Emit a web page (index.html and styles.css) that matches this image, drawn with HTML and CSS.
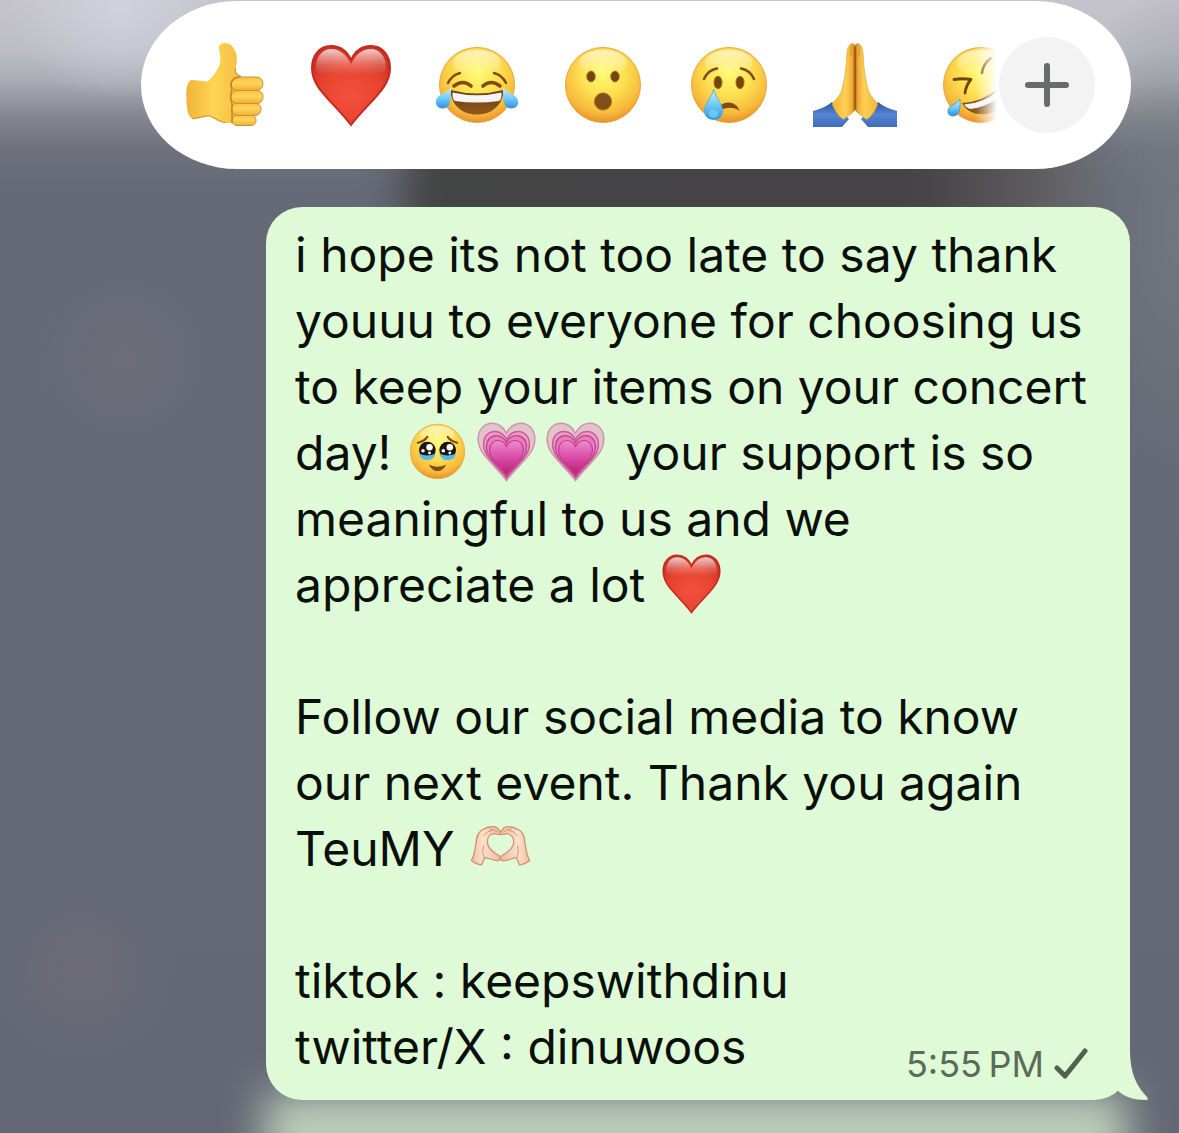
FILE: index.html
```html
<!DOCTYPE html>
<html lang="en">
 <head>
    <title>Message</title>
    <meta charset="UTF-8">
    <link rel="stylesheet" href="styles.css">
 </head>
 <body>
    <!-- shared emoji drawings -->
    <svg class="defs" aria-hidden="true">
      <defs>
        <radialGradient id="face" cx="50%" cy="34%" r="68%">
          <stop offset="0" stop-color="#fffb74"/>
          <stop offset=".45" stop-color="#fddf50"/>
          <stop offset=".8" stop-color="#f7b93b"/>
          <stop offset="1" stop-color="#e48a2c"/>
        </radialGradient>
        <linearGradient id="shine" x1="0" y1="0" x2="0" y2="1">
          <stop offset="0" stop-color="#fff" stop-opacity=".6"/>
          <stop offset="1" stop-color="#fff" stop-opacity="0"/>
        </linearGradient>
        <linearGradient id="heartshine" x1="0" y1="0" x2="0" y2="1">
          <stop offset="0" stop-color="#fff" stop-opacity=".75"/>
          <stop offset=".5" stop-color="#fff" stop-opacity=".2"/>
          <stop offset=".8" stop-color="#fff" stop-opacity="0"/>
        </linearGradient>
        <linearGradient id="tear" x1="0" y1="0" x2="0" y2="1">
          <stop offset="0" stop-color="#c4f0ff"/>
          <stop offset=".55" stop-color="#6cc8f7"/>
          <stop offset="1" stop-color="#2f8fdf"/>
        </linearGradient>
        <linearGradient id="mouth" x1="0" y1="0" x2="0" y2="1">
          <stop offset="0" stop-color="#6a3c10"/>
          <stop offset="1" stop-color="#8f5a1b"/>
        </linearGradient>
        <radialGradient id="red" cx="50%" cy="62%" r="62%">
          <stop offset="0" stop-color="#f4503e"/>
          <stop offset=".65" stop-color="#e6432f"/>
          <stop offset="1" stop-color="#c93224"/>
        </radialGradient>
        <linearGradient id="skin" x1="0" y1="0" x2="0" y2="1">
          <stop offset="0" stop-color="#f6c044"/>
          <stop offset=".45" stop-color="#ffd658"/>
          <stop offset="1" stop-color="#eead36"/>
        </linearGradient>
        <linearGradient id="palm" x1="0" y1="0" x2="1" y2="0">
          <stop offset="0" stop-color="#efb43a"/>
          <stop offset=".4" stop-color="#ffd452"/>
          <stop offset="1" stop-color="#f0b03a"/>
        </linearGradient>
        <linearGradient id="prayskin" x1="0" y1="0" x2="1" y2="0">
          <stop offset="0" stop-color="#f0b538"/>
          <stop offset=".6" stop-color="#ffd052"/>
          <stop offset=".88" stop-color="#efaa38"/>
          <stop offset="1" stop-color="#a96512"/>
        </linearGradient>
        <linearGradient id="sleeve" x1="0" y1="0" x2="0" y2="1">
          <stop offset="0" stop-color="#2c54a0"/>
          <stop offset=".5" stop-color="#5584d2"/>
          <stop offset="1" stop-color="#3f6bba"/>
        </linearGradient>
        <linearGradient id="pink" x1="0" y1="0" x2="0" y2="1">
          <stop offset="0" stop-color="#f08ccb"/>
          <stop offset=".45" stop-color="#dc52ae"/>
          <stop offset="1" stop-color="#b81f68"/>
        </linearGradient>
        <linearGradient id="light" x1="0" y1="0" x2="1" y2="0">
          <stop offset="0" stop-color="#efc0a0"/>
          <stop offset=".4" stop-color="#fce0ca"/>
          <stop offset="1" stop-color="#eebb9c"/>
        </linearGradient>
        <path id="heart" d="M42 17C38 8 31 3 22 3C11 3 3 12 3 25C3 46 24 58 42 82C60 58 81 46 81 25C81 12 73 3 62 3C53 3 46 8 42 17Z"/>
        <g id="ball">
          <circle cx="42" cy="42" r="37.500" fill="url(#face)" stroke="#eda23b"/>
          <ellipse cx="42" cy="20" rx="24" ry="13" fill="url(#shine)"/>
        </g>
      </defs>
      <symbol id="thumb" viewBox="0 0 84 84">
        <path fill="url(#palm)" d="M42 0C37 0 35 3 36 7C38 13 38 18 36 23C33 30 28 36 24 38.500L9 37C5 37 3 44 3.300 54C3.500 65 5 74 9 75.500C15 76 22 72 27 73C32 75 36 79 43 79.700L64 81L72 45L58 33.500C52 31 52 29 52.500 25C55 18 54 11 51 6C49 2 46 0 42 0Z"/>
        <path fill="none" stroke="#d7962b" stroke-width="1.200" d="M9 75.500C15 76 22 72 27 73C32 75 36 79 43 79.700M52.500 25C52 29 52 31 58 33.500"/>
        <g fill="url(#skin)" stroke="#cf8f2a" stroke-width="1">
          <rect x="49" y="72" width="24" height="10.500" rx="5"/>
          <rect x="48.500" y="60" width="29.500" height="12.500" rx="6"/>
          <rect x="48" y="47.500" width="32" height="13" rx="6"/>
          <rect x="48" y="34" width="32" height="13.500" rx="6.500"/>
        </g>
        <path fill="none" stroke="#bd7d20" stroke-width="1.200" d="M57 34C49 35 46 42 49 46C47 53 47 57 49 60V80"/>
      </symbol>
      <symbol id="redheart" viewBox="0 0 84 84">
        <use href="#heart" fill="url(#red)"/>
        <use href="#heart" fill="none" stroke="#c5291b" stroke-width="2"/>
        <path fill="url(#heartshine)" d="M7 24C7 13 14 6 22 6C31 6 38 12 42 22C46 12 53 6 62 6C70 6 77 13 77 24C77 33 70 38 42 38S7 33 7 24Z"/>
      </symbol>
      <symbol id="joy" viewBox="0 0 84 84">
        <use href="#ball"/>
        <g fill="none" stroke="#814b15" stroke-linecap="round">
          <path stroke-width="2.400" d="M13 40Q17 32 25 30M71 40Q67 32 59 30"/>
          <path stroke-width="3.600" d="M19 43Q28 36 36 43M48 43Q56 36 65 43"/>
        </g>
        <path fill="url(#mouth)" d="M15.500 47Q42 54 68.500 47C68 61 58 71.500 42 71.500S16 61 15.500 47Z"/>
        <path fill="#f5f3f4" d="M17.500 49.500Q42 55 66.500 49.500Q67 56 64 58Q42 61 20 58Q17 56 17.500 49.500Z"/>
        <path fill="url(#tear)" d="M16 44.500C16 53 17 65 8 65.500C-1 65.500-1 56 5 52Q12 49 16 44.500ZM68 44.500C68 53 67 65 76 65.500C85 65.500 85 56 79 52Q72 49 68 44.500Z"/>
      </symbol>
      <symbol id="wow" viewBox="0 0 84 84">
        <use href="#ball"/>
        <g fill="#75440f" stroke="#a56a1e">
          <ellipse cx="30" cy="33.500" rx="4.200" ry="5.400"/>
          <ellipse cx="54" cy="33.500" rx="4.200" ry="5.400"/>
          <circle cx="42" cy="58.500" r="8.500" fill="#805019"/>
        </g>
      </symbol>
      <symbol id="cry" viewBox="0 0 84 84">
        <use href="#ball"/>
        <g fill="#75440f" stroke="#a56a1e">
          <ellipse cx="31" cy="39.500" rx="4" ry="6.200"/>
          <ellipse cx="53" cy="39.500" rx="4" ry="6.200"/>
        </g>
        <path fill="none" stroke="#814b15" stroke-width="2.600" stroke-linecap="round" d="M17 36Q21 27 30 25.500M67 36Q63 27 54 25.500"/>
        <path fill="#814b15" d="M33 63C39 57 50 59 52.500 68C47 64 41 64 34 67Z"/>
        <path fill="url(#tear)" stroke="#4aa6e8" stroke-width=".8" d="M26.700 46C28 54 35.500 60 35.500 68C35.500 73 32 76.500 26.500 76.500S17.500 73 17.500 68C17.500 60 25 54 26.700 46Z"/>
        <ellipse cx="26.500" cy="71" rx="5" ry="4" fill="#8be6ff" opacity=".5"/>
      </symbol>
      <symbol id="pray" viewBox="0 0 84 84">
        <g id="prayhand">
          <path fill="url(#sleeve)" d="M0 68Q12 65 19 59L36 76L29 84H0Z"/>
          <path fill="url(#prayskin)" stroke="#d0912a" stroke-width=".5" d="M42 3C41 0 38 0 37 2C34 4 34 10 33.500 16C33 29 31 38 28.500 48C26 54 22 57 19 61C22 68 26 75 31 76.500C34 73 38 72 42 67Z"/>
          <path fill="none" stroke="#c98a26" stroke-width=".8" d="M38 2V13"/>
        </g>
        <use href="#prayhand" transform="matrix(-1 0 0 1 84 0)"/>
        <path stroke="#8d4f0c" stroke-width="1.200" d="M42 4V66"/>
      </symbol>
      <symbol id="rofl" viewBox="0 0 84 84">
        <use href="#ball"/>
        <path fill="none" stroke="#75440f" stroke-width="2.800" stroke-linejoin="round" stroke-linecap="round" d="M15 36.500Q24 35 32 36.500Q27 42 26 50"/>
        <path fill="none" stroke="#814b15" stroke-width="2.600" stroke-linecap="round" d="M52 15Q44 21 43 30"/>
        <path fill="url(#mouth)" d="M23 60Q44 59 60 44C68 56 62 69 48 71C38 72 28 70 23 60Z"/>
        <path fill="#f5f3f4" d="M25 61.500Q46 60 60 47Q62 52 60 54Q48 64 31 66Q27 65 25 61.500Z"/>
        <path fill="url(#tear)" stroke="#3b94d5" stroke-width=".8" d="M21 56C21 63 22 73 14 73C7 73 8 65 12 63Q18 60 21 56Z"/>
      </symbol>
      <symbol id="tears" viewBox="0 0 84 84">
        <use href="#ball"/>
        <path fill="none" stroke="#814b15" stroke-width="3" stroke-linecap="round" d="M15 30Q24 28 28 22M69 30Q60 28 56 22"/>
        <g id="wateryeye">
          <circle cx="28" cy="40" r="11.500" fill="#1d130f"/>
          <path fill="#55b9ee" d="M17 45Q28 50 39 45C39 56 18 57 17 45Z"/>
          <circle cx="31" cy="36" r="4.500" fill="#fff"/>
          <circle cx="22" cy="41" r="2.500" fill="#fff"/>
          <circle cx="31" cy="44" r="2" fill="#fff"/>
        </g>
        <use href="#wateryeye" x="28"/>
        <path fill="#814b15" d="M30 60Q42 66 54 60Q50 69 42 69T30 60Z"/>
      </symbol>
      <symbol id="pinkheart" viewBox="0 0 84 84">
        <use href="#heart" fill="#e2c3c9" stroke="#d092ac" stroke-width="2"/>
        <use href="#heart" fill="#e99cc8" stroke="#cc5c99" stroke-width="2.500" transform="matrix(.81 0 0 .81 8 12)"/>
        <use href="#heart" fill="#e67fbe" stroke="#c44190" stroke-width="2.500" transform="matrix(.71 0 0 .71 12.200 18)"/>
        <use href="#heart" fill="url(#pink)" stroke="#bf3a8b" stroke-width="2.500" transform="matrix(.6 0 0 .6 16.800 25)"/>
      </symbol>
      <symbol id="hands" viewBox="24 9 186 186">
        <g id="lefthand" fill="url(#light)" stroke="#d39270" stroke-width="4" stroke-linejoin="round">
          <path d="M28 142C38 125 39 108 42 90C43 68 52 51 66 46C80 38 98 36 106 42C113 49 121 57 117 61C112 67 105 58 96 60C83 62 76 74 77 88C80 106 95 117 110 125C121 131 118 142 107 142C94 143 80 132 68 134L59 155C48 154 36 149 28 142Z"/>
          <path fill="none" stroke-width="3" d="M66 66Q77 50 92 50M83 45Q98 46 108 55M68 134Q59 118 65 96"/>
        </g>
        <use href="#lefthand" transform="matrix(-1 0 0 1 234 0)"/>
      </symbol>
    </svg>

    <main class="screen">
      <div class="reactions">
        <div class="emoji_list">
          <button class="bt_emoji" aria-label="Like"><svg><use href="#thumb"/></svg></button>
          <button class="bt_emoji" aria-label="Love"><svg><use href="#redheart"/></svg></button>
          <button class="bt_emoji" aria-label="Laugh"><svg><use href="#joy"/></svg></button>
          <button class="bt_emoji" aria-label="Wow"><svg><use href="#wow"/></svg></button>
          <button class="bt_emoji" aria-label="Sad"><svg><use href="#cry"/></svg></button>
          <button class="bt_emoji" aria-label="Thanks"><svg><use href="#pray"/></svg></button>
          <button class="bt_emoji" aria-label="Rolling"><svg><use href="#rofl"/></svg></button>
        </div>
        <button class="bt_more" aria-label="More reactions">
          <svg viewBox="0 0 48 48"><path d="M24 5V43M5 24H43"/></svg>
        </button>
      </div>

      <div class="bubble">
        <div class="text">
          <p>i hope its not too late to say thank<br>
          youuu to everyone for choosing us<br>
          to keep your items on your concert<br>
          day! <svg class="emoji"><use href="#tears"/></svg><svg class="emoji"><use href="#pinkheart"/></svg><svg class="emoji"><use href="#pinkheart"/></svg> your support is so<br>
          meaningful to us and we<br>
          appreciate a lot <svg class="emoji"><use href="#redheart"/></svg></p>
          <p>Follow our social media to know<br>
          our next event. Thank you again<br>
          TeuMY <svg class="emoji"><use href="#hands"/></svg></p>
          <p>tiktok : keepswithdinu<br>
          twitter/X : dinuwoos</p>
        </div>
        <div class="meta">
          <time>5:55&#8201;PM</time>
          <svg class="tick" viewBox="0 0 34 32"><path d="M3 20L11 28L31 3"/></svg>
        </div>
        <svg class="tail" viewBox="0 0 40 64"><path d="M0 0H21V12C21 36 27 48 38 60Q40 63 37 63C25 63 16 60 9 54L0 44Z"/></svg>
      </div>
    </main>
 </body>
</html>
```
FILE: styles.css
```css
body {
    margin: 0;
    font-family: Inter, "Liberation Sans", sans-serif;
    color: #0b0f0a;
}
.defs {position: absolute; width: 0; height: 0;}
.screen {
    position: relative;
    z-index: 0;
    box-sizing: border-box;
    min-height: 100vh;
    padding: 1px 48px 33px 141px;
    overflow: hidden;
    background:
      radial-gradient(circle at 125px 360px, rgba(118,114,124,.4), transparent 90px),
      radial-gradient(circle at 82px 970px, rgba(120,112,122,.45), transparent 90px),
      radial-gradient(ellipse 110px 90px at 120px 10px, rgba(212,218,228,.7), transparent),
      radial-gradient(ellipse 110px 260px at 100% 230px, rgba(122,126,130,.6), transparent),
      linear-gradient(to bottom, #c6c3cb 0, #bcbdc5 50px, #abadb6 80px, #858891 115px, #6e717c 150px, #666a77 190px, #646875 100%);
}
/* blurred chat behind the overlay */
.screen::before, .screen::after {content: ""; position: absolute; z-index: -1; filter: blur(20px);}
.screen::before {
    top: 120px;
    left: 405px;
    right: 90px;
    height: 130px;
    background: linear-gradient(to right, #434444, #464346 75%, #5a585c 90%, #6b6c70);
}
.screen::after {bottom: -60px; left: 265px; right: 52px; height: 100px; background: #bccdb9;}
.reactions {
    box-sizing: border-box;
    display: flex;
    align-items: center;
    height: 168px;
    padding: 0 36px 0 22px;
    margin-bottom: 38px;
    background: #fff;
    border-radius: 96px / 84px;
}
.emoji_list {
    display: flex;
    flex: 1;
    min-width: 0;
    overflow: hidden;
    -webkit-mask-image: linear-gradient(to right, #000 calc(100% - 24px), transparent calc(100% - 2px));
    mask-image: linear-gradient(to right, #000 calc(100% - 24px), transparent calc(100% - 2px));
}
button {border: 0; padding: 0; background: none; cursor: pointer;}
.bt_emoji {flex: none; width: 126px; height: 84px;}
.bt_emoji svg {display: block; width: 84px; height: 84px; margin: 0 20px;}
.bt_more {
    display: flex;
    align-items: center;
    justify-content: center;
    width: 96px;
    height: 96px;
    border-radius: 50%;
    background: #f3f3f3;
}
.bt_more svg {width: 48px; height: 48px; fill: none; stroke: #6a6b6b; stroke-width: 6; stroke-linecap: round;}
.bubble {
    position: relative;
    display: grid;
    margin: 0 1px 0 125px;
    padding: 15px 42px 20px 29px;
    background: #defad7;
    border-radius: 36px;
}
.text, .meta {grid-area: 1 / 1;}
.text {font-size: 48px; line-height: 66px; white-space: nowrap;}
.text p {margin: 0 0 66px;}
.text p:last-child {margin-bottom: 0;}
.emoji {width: 61px; height: 61px; margin: -8px 6px -8px 2px; vertical-align: -4px;}
.meta {
    align-self: end;
    justify-self: end;
    display: flex;
    align-items: center;
    gap: 10px;
    font-size: 36px;
    line-height: 32px;
    color: #5b6b58;
}
.tick {flex: none; width: 34px; height: 32px; fill: none; stroke: #52614f; stroke-width: 5; stroke-linecap: round; stroke-linejoin: round;}
.tail {position: absolute; right: -19px; bottom: -1px; width: 40px; height: 64px; fill: #defad7;}
```
